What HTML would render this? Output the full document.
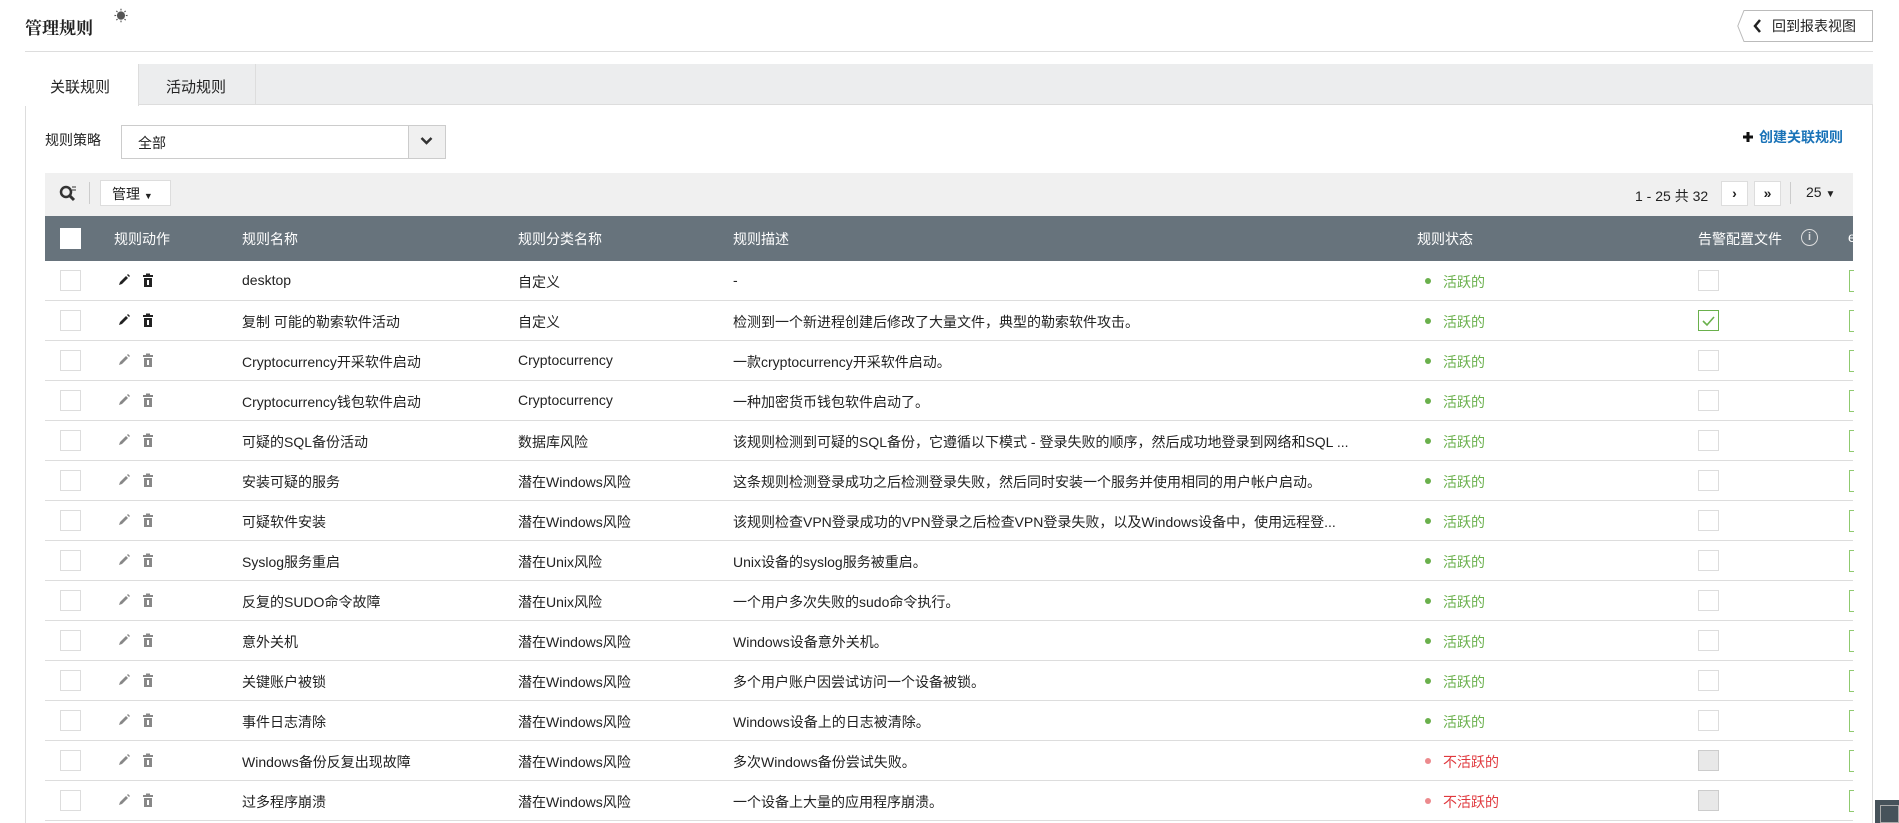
<!DOCTYPE html>
<html><head><meta charset="utf-8"><style>
*{margin:0;padding:0;box-sizing:border-box}
body{width:1899px;height:823px;overflow:hidden;background:#fff;font-family:"Liberation Sans","Noto Sans CJK SC",sans-serif;font-size:14px;color:#222;position:relative}
.a{position:absolute;white-space:nowrap}
.cb{position:absolute;width:21px;height:21px;border:1px solid #ddd;background:#fff}
.row{position:absolute;left:45px;width:1808px;height:40px;border-bottom:1px solid #ddd}
.row .a{top:11px}
.g{color:#6ab04c}.r{color:#e0393e}
.dot{position:absolute;top:17px;width:6px;height:6px;border-radius:50%}
</style></head><body>
<div class="a" style="left:25px;top:14px;font-size:17px;font-weight:bold;font-family:'Noto Serif CJK SC',serif">管理规则</div>
<div class="a" style="left:114px;top:6px;font-size:14px;color:#555">☀</div>
<div class="a" style="left:25px;top:51px;width:1848px;height:1px;background:#ddd"></div>
<div class="a" style="left:1744px;top:10px;width:129px;height:32px;border:1px solid #bbb;border-left:none;background:#fff"></div>
<svg class="a" style="left:1737px;top:10px" width="16" height="32"><path d="M16 0.5H7L0.8 16L7 31.5H16" fill="#fff" stroke="#bbb"/></svg>
<svg class="a" style="left:1752px;top:19px" width="10" height="14"><path d="M8 1L3 7L8 13" fill="none" stroke="#222" stroke-width="2.5"/></svg>
<div class="a" style="left:1772px;top:16px;font-size:14px">回到报表视图</div>
<div class="a" style="left:25px;top:64px;width:1848px;height:759px;border:1px solid #ddd;border-bottom:none"></div>
<div class="a" style="left:25px;top:64px;width:1848px;height:41px;background:#ecedee;border-bottom:1px solid #ddd"></div>
<div class="a" style="left:25px;top:64px;width:114px;height:42px;background:#fff;border-right:1px solid #ddd"></div>
<div class="a" style="left:139px;top:64px;width:117px;height:41px;border-right:1px solid #ddd"></div>
<div class="a" style="left:50px;top:76px;font-size:15px">关联规则</div>
<div class="a" style="left:166px;top:76px;font-size:15px">活动规则</div>
<div class="a" style="left:45px;top:130px">规则策略</div>
<div class="a" style="left:121px;top:125px;width:325px;height:34px;border:1px solid #ccc"></div>
<div class="a" style="left:408px;top:126px;width:37px;height:32px;background:#f0f0f0;border-left:1px solid #ccc"></div>
<svg class="a" style="left:420px;top:136px" width="13" height="10"><path d="M1.5 2L6.5 7L11.5 2" fill="none" stroke="#333" stroke-width="2.5"/></svg>
<div class="a" style="left:138px;top:133px">全部</div>
<svg class="a" style="left:1742px;top:131px" width="12" height="12"><path d="M6 1V11M1 6H11" stroke="#111" stroke-width="3"/></svg>
<div class="a" style="left:1759px;top:127px;color:#1a73b8;font-weight:bold">创建关联规则</div>
<div class="a" style="left:45px;top:173px;width:1808px;height:43px;background:#f0f0f0"></div>
<svg class="a" style="left:59px;top:184px" width="18" height="18"><circle cx="7" cy="8" r="5" fill="none" stroke="#333" stroke-width="2.5"/><path d="M10 11L15 16" stroke="#333" stroke-width="3"/><path d="M13 3h4M13 6h4" stroke="#333" stroke-width="1"/></svg>
<div class="a" style="left:89px;top:182px;width:1px;height:22px;background:#ccc"></div>
<div class="a" style="left:100px;top:180px;width:71px;height:26px;background:#fff;border:1px solid #ddd"></div>
<div class="a" style="left:112px;top:184px">管理 <span style="font-size:9px">▼</span></div>
<div class="a" style="left:1635px;top:186px">1 - 25 共 32</div>
<div class="a" style="left:1721px;top:181px;width:27px;height:25px;background:#fff;border:1px solid #ddd;font-weight:bold;text-align:center;line-height:22px">›</div>
<div class="a" style="left:1754px;top:181px;width:27px;height:25px;background:#fff;border:1px solid #ddd;font-weight:bold;text-align:center;line-height:22px">»</div>
<div class="a" style="left:1790px;top:182px;width:1px;height:22px;background:#ccc"></div>
<div class="a" style="left:1806px;top:184px">25 <span style="font-size:10px">▼</span></div>
<div class="a" style="left:45px;top:216px;width:1808px;height:45px;background:#67737c"></div>
<div class="cb" style="left:60px;top:228px;border:none"></div>
<div class="a" style="left:114px;top:229px;color:#fff">规则动作</div>
<div class="a" style="left:242px;top:229px;color:#fff">规则名称</div>
<div class="a" style="left:518px;top:229px;color:#fff">规则分类名称</div>
<div class="a" style="left:733px;top:229px;color:#fff">规则描述</div>
<div class="a" style="left:1417px;top:229px;color:#fff">规则状态</div>
<div class="a" style="left:1698px;top:229px;color:#fff">告警配置文件</div>
<div class="a" style="left:1801px;top:229px;width:17px;height:17px;border:1.5px solid #ddd;border-radius:50%;color:#ddd;font-size:11px;text-align:center;line-height:14px;font-weight:bold">i</div>
<div class="a" style="left:1848px;top:229px;color:#fff">e</div>
<div id="rows"></div>
<script>
var d=[["desktop","自定义","-",1,0,1],["复制 可能的勒索软件活动","自定义","检测到一个新进程创建后修改了大量文件，典型的勒索软件攻击。",1,1,1],["Cryptocurrency开采软件启动","Cryptocurrency","一款cryptocurrency开采软件启动。",1,0,0],["Cryptocurrency钱包软件启动","Cryptocurrency","一种加密货币钱包软件启动了。",1,0,0],["可疑的SQL备份活动","数据库风险","该规则检测到可疑的SQL备份，它遵循以下模式 - 登录失败的顺序，然后成功地登录到网络和SQL ...",1,0,0],["安装可疑的服务","潜在Windows风险","这条规则检测登录成功之后检测登录失败，然后同时安装一个服务并使用相同的用户帐户启动。",1,0,0],["可疑软件安装","潜在Windows风险","该规则检查VPN登录成功的VPN登录之后检查VPN登录失败，以及Windows设备中，使用远程登...",1,0,0],["Syslog服务重启","潜在Unix风险","Unix设备的syslog服务被重启。",1,0,0],["反复的SUDO命令故障","潜在Unix风险","一个用户多次失败的sudo命令执行。",1,0,0],["意外关机","潜在Windows风险","Windows设备意外关机。",1,0,0],["关键账户被锁","潜在Windows风险","多个用户账户因尝试访问一个设备被锁。",1,0,0],["事件日志清除","潜在Windows风险","Windows设备上的日志被清除。",1,0,0],["Windows备份反复出现故障","潜在Windows风险","多次Windows备份尝试失败。",0,0,0],["过多程序崩溃","潜在Windows风险","一个设备上大量的应用程序崩溃。",0,0,0]];
var h="";
d.forEach(function(r,i){
var c=r[5]?"#222":"#888";
var ck=r[4]?'<div class="cb" style="left:1653px;top:9px;border:1px solid #6ab04c"><svg width="19" height="19"><path d="M4 10L8 14L15 6" fill="none" stroke="#6ab04c" stroke-width="1.6"/></svg></div>':'<div class="cb" style="left:1653px;top:9px;'+(r[3]?'':'background:#e8e8e8;border-color:#ccc')+'"></div>';
h+='<div class="row" style="top:'+(261+i*40)+'px"><div class="cb" style="left:15px;top:9px"></div>'+
'<svg class="a" style="left:72px;top:12px" width="14" height="14"><path d="M2 12L3 9L9 3L11 5L5 11Z" fill="'+c+'"/><path d="M10 2L11 1L13 3L12 4Z" fill="'+c+'"/></svg>'+
'<svg class="a" style="left:97px;top:12px" width="12" height="15"><rect x="1" y="2" width="10" height="2" fill="'+c+'"/><rect x="4" y="0.5" width="4" height="2" fill="'+c+'"/><rect x="2" y="5" width="8" height="9" fill="'+c+'"/><rect x="5" y="7" width="2" height="5" fill="#fff"/></svg>'+
'<div class="a" style="left:197px">'+r[0]+'</div><div class="a" style="left:473px">'+r[1]+'</div><div class="a" style="left:688px">'+r[2]+'</div>'+
'<div class="dot" style="left:1380px;background:'+(r[3]?'#6ab04c':'#ec8a8d')+'"></div><div class="a '+(r[3]?'g':'r')+'" style="left:1398px">'+(r[3]?'活跃的':'不活跃的')+'</div>'+ck+
'<div class="a" style="left:1804px;top:9px;width:5px;height:22px;border:1px solid #8fca6f;border-right:none"></div></div>';
});
document.getElementById("rows").innerHTML=h;
</script>
<div class="a" style="left:1875px;top:800px;width:24px;height:23px;background:#46525a"></div>
<div class="a" style="left:1880px;top:805px;width:19px;height:18px;border:1px solid #aaa"></div>
</body></html>
